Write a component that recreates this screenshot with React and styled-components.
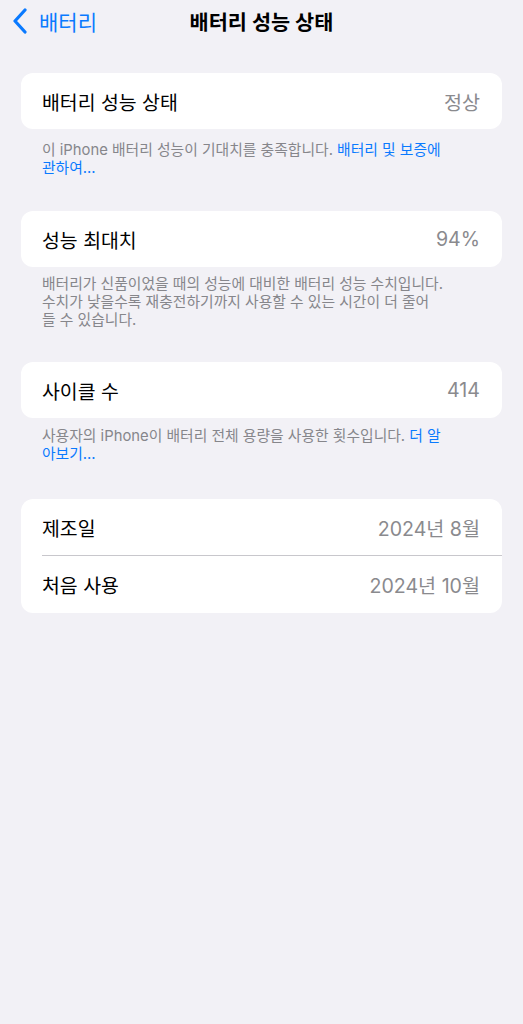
import React from "react";
import styled, { createGlobalStyle } from "styled-components";

const GlobalStyle = createGlobalStyle`
  html, body {
    margin: 0;
    padding: 0;
    background: #f2f1f6;
  }
  body {
    font-family: Inter, "Noto Sans CJK KR", "Noto Sans", sans-serif;
    -webkit-font-smoothing: antialiased;
  }
`;

const Screen = styled.div`
  min-height: 1024px;
  background: #f2f1f6;
  display: flex;
  flex-direction: column;
`;

const NavBar = styled.header`
  height: 42px;
  display: grid;
  grid-template-columns: 1fr auto 1fr;
  align-items: center;
  padding: 0 12px;
`;

const BackButton = styled.button`
  justify-self: start;
  display: flex;
  align-items: center;
  gap: 11px;
  background: none;
  border: 0;
  padding: 0;
  color: #0a7aff;
  font-family: inherit;
  font-size: 21px;
  cursor: pointer;
`;

const Title = styled.h1`
  margin: 0;
  font-size: 20.8px;
  font-weight: 700;
  color: #000;
`;

const Content = styled.main`
  padding: 31px 21px 0;
  display: flex;
  flex-direction: column;
`;

const Section = styled.section`
  display: flex;
  flex-direction: column;
  margin-bottom: ${(p) => p.$gap || 34}px;
`;

const Card = styled.div`
  background: #fff;
  border-radius: 12px;
  overflow: hidden;
`;

const Row = styled.div`
  height: ${(p) => p.$h || 56}px;
  display: flex;
  align-items: center;
  justify-content: space-between;
  padding: 0 22px 0 21px;
  position: relative;
  ${(p) =>
    p.$divider &&
    `
    &::after {
      content: "";
      position: absolute;
      left: 21px;
      right: 0;
      bottom: 0;
      height: 1px;
      background: #c8c7cc;
    }
  `}
`;

const Label = styled.span`
  font-size: 19.4px;
  color: #000;
`;

const Value = styled.span`
  font-size: 19.6px;
  color: #8a8a8e;
`;

const Footer = styled.p`
  margin: ${(p) => p.$top || 10}px 0 0;
  padding: 0 21px;
  font-size: 14.8px;
  line-height: 18px;
  color: #86868b;
  word-break: keep-all;
  white-space: nowrap;
`;

const Link = styled.a`
  color: #0a7aff;
  text-decoration: none;
`;

const Chevron = () => (
  <svg width="16" height="26" viewBox="0 0 16 26" fill="none">
    <path
      d="M13 2 L3 13 L13 24"
      stroke="#0a7aff"
      strokeWidth="3.2"
      strokeLinecap="round"
      strokeLinejoin="round"
    />
  </svg>
);

export default function App() {
  return (
    <Screen>
      <GlobalStyle />
      <NavBar>
        <BackButton>
          <Chevron />
          배터리
        </BackButton>
        <Title>배터리 성능 상태</Title>
        <span />
      </NavBar>

      <Content>
        <Section>
          <Card>
            <Row>
              <Label>배터리 성능 상태</Label>
              <Value>정상</Value>
            </Row>
          </Card>
          <Footer $top={12}>
            이 iPhone 배터리 성능이 기대치를 충족합니다.{" "}
            <Link>
              배터리 및 보증에
              <br />
              관하여...
            </Link>
          </Footer>
        </Section>

        <Section $gap={33}>
          <Card>
            <Row>
              <Label>성능 최대치</Label>
              <Value>94%</Value>
            </Row>
          </Card>
          <Footer $top={8}>
            배터리가 신품이었을 때의 성능에 대비한 배터리 성능 수치입니다.
            <br />
            수치가 낮을수록 재충전하기까지 사용할 수 있는 시간이 더 줄어
            <br />
            들 수 있습니다.
          </Footer>
        </Section>

        <Section $gap={36}>
          <Card>
            <Row>
              <Label>사이클 수</Label>
              <Value>414</Value>
            </Row>
          </Card>
          <Footer $top={9}>
            사용자의 iPhone이 배터리 전체 용량을 사용한 횟수입니다.{" "}
            <Link>
              더 알
              <br />
              아보기...
            </Link>
          </Footer>
        </Section>

        <Section>
          <Card>
            <Row $h={57} $divider>
              <Label>제조일</Label>
              <Value>2024년 8월</Value>
            </Row>
            <Row $h={57}>
              <Label>처음 사용</Label>
              <Value>2024년 10월</Value>
            </Row>
          </Card>
        </Section>
      </Content>
    </Screen>
  );
}
